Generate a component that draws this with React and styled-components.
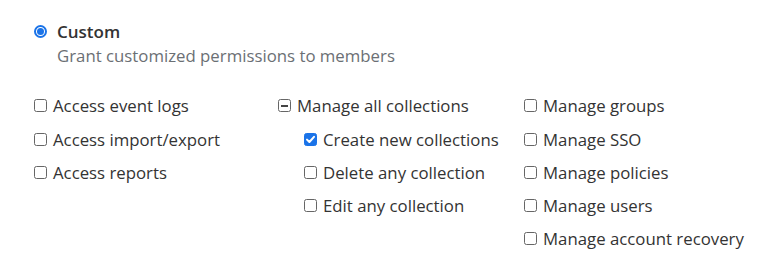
import styled, { createGlobalStyle } from "styled-components";

const GlobalStyle = createGlobalStyle`
  body {
    margin: 0;
    background: #fff;
    font-family: "Open Sans", "Liberation Sans", sans-serif;
    color: #333;
  }
`;

const columns = [
  [
    { label: "Access event logs" },
    { label: "Access import/export" },
    { label: "Access reports" },
  ],
  [
    { label: "Manage all collections", state: "mixed" },
    { label: "Create new collections", state: "checked", nested: true },
    { label: "Delete any collection", nested: true },
    { label: "Edit any collection", nested: true },
  ],
  [
    { label: "Manage groups" },
    { label: "Manage SSO" },
    { label: "Manage policies" },
    { label: "Manage users" },
    { label: "Manage account recovery" },
  ],
];

const Page = styled.div`
  padding: 19px 0 0 34px;
`;

const RadioRow = styled.label`
  display: flex;
  align-items: center;
  gap: 10px;
  height: 24px;
`;

const Radio = styled.span`
  width: 13px;
  height: 13px;
  box-sizing: border-box;
  border-radius: 50%;
  border: 2px solid #1a73e8;
  display: flex;
  align-items: center;
  justify-content: center;
  &::after {
    content: "";
    width: 7px;
    height: 7px;
    border-radius: 50%;
    background: #1a73e8;
  }
`;

const Title = styled.span`
  font-size: 17px;
  font-weight: 600;
  color: #333;
`;

const Hint = styled.div`
  margin: 1px 0 0 23px;
  font-size: 16.8px;
  color: #6b6f74;
  line-height: 24px;
`;

const Grid = styled.div`
  display: grid;
  grid-template-columns: 244px 246px auto;
  margin-top: 26px;
`;

const Column = styled.div`
  display: flex;
  flex-direction: column;
  gap: 9.8px;
`;

const Item = styled.label`
  display: flex;
  align-items: center;
  gap: 6px;
  height: 23.5px;
  padding-left: ${(p) => (p.$nested ? "26px" : "0")};
  font-size: 16.8px;
  color: #333;
`;

const Box = styled.span`
  width: 13px;
  height: 13px;
  box-sizing: border-box;
  border-radius: 2.5px;
  flex: none;
  display: flex;
  align-items: center;
  justify-content: center;
  border: 1px solid ${(p) => (p.$state === "checked" ? "#1a73e8" : "#666")};
  background: ${(p) => (p.$state === "checked" ? "#1a73e8" : "#fff")};
`;

const Dash = styled.span`
  width: 7px;
  height: 2px;
  background: #444;
`;

function Check({ state }) {
  return (
    <Box $state={state}>
      {state === "mixed" && <Dash />}
      {state === "checked" && (
        <svg width="11" height="11" viewBox="0 0 11 11">
          <path
            d="M2 5.6 L4.4 8 L9 2.8"
            fill="none"
            stroke="#fff"
            strokeWidth="2"
            strokeLinecap="round"
            strokeLinejoin="round"
          />
        </svg>
      )}
    </Box>
  );
}

export default function App() {
  return (
    <>
      <GlobalStyle />
      <Page>
        <RadioRow>
          <Radio />
          <Title>Custom</Title>
        </RadioRow>
        <Hint>Grant customized permissions to members</Hint>
        <Grid>
          {columns.map((col, i) => (
            <Column key={i}>
              {col.map((it) => (
                <Item key={it.label} $nested={it.nested}>
                  <Check state={it.state} />
                  {it.label}
                </Item>
              ))}
            </Column>
          ))}
        </Grid>
      </Page>
    </>
  );
}
